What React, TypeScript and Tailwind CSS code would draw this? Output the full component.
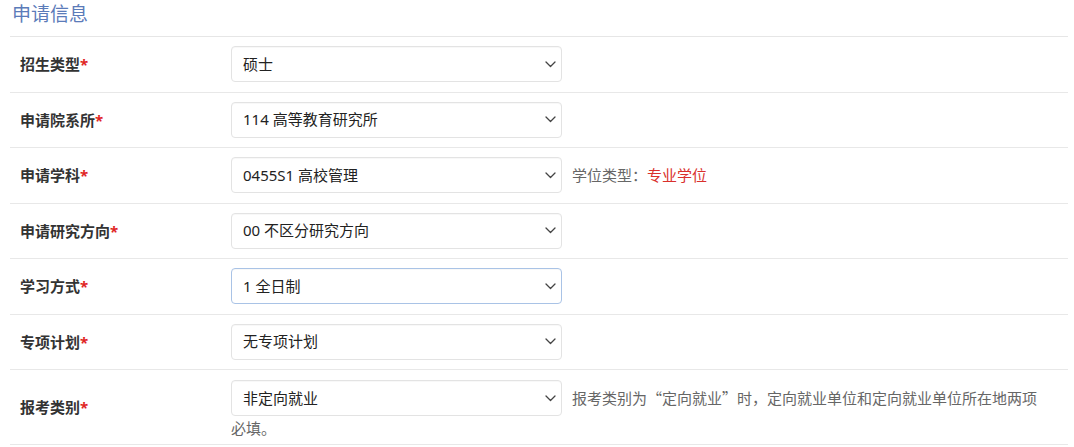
import React from 'react';

type Row = {
  label: string;
  value: string;
  focused?: boolean;
  extra?: React.ReactNode;
  more?: string;
};

const rows: Row[] = [
  { label: '招生类型', value: '硕士' },
  { label: '申请院系所', value: '114 高等教育研究所' },
  {
    label: '申请学科',
    value: '0455S1 高校管理',
    extra: (
      <>
        学位类型：<span className="text-[#d9302c]">专业学位</span>
      </>
    ),
  },
  { label: '申请研究方向', value: '00 不区分研究方向' },
  { label: '学习方式', value: '1 全日制', focused: true },
  { label: '专项计划', value: '无专项计划' },
  {
    label: '报考类别',
    value: '非定向就业',
    extra: '报考类别为“定向就业”时，定向就业单位和定向就业单位所在地两项',
    more: '必填。',
  },
];

const cjk = { fontFamily: '"Noto Sans CJK SC", sans-serif' };

function Chevron() {
  return (
    <svg width="11" height="7" viewBox="0 0 11 7" fill="none" className="shrink-0">
      <path d="M1 1l4.5 4.5L10 1" stroke="#444" strokeWidth="1.3" strokeLinecap="round" strokeLinejoin="round" />
    </svg>
  );
}

function SelectBox({ value, focused }: { value: string; focused?: boolean }) {
  return (
    <span
      className={`flex shrink-0 items-center justify-between w-[331px] h-[36px] pl-[11px] pr-[5px] rounded-[4px] border bg-white text-[15px] leading-none text-[#222] shadow-[inset_0_1px_1px_rgba(0,0,0,0.03)] ${
        focused ? 'border-[#a9c3e6]' : 'border-[#e3e3e3]'
      }`}
    >
      <span>{value}</span>
      <Chevron />
    </span>
  );
}

export default function App() {
  return (
    <div
      className="w-[1074px] h-[447px] bg-white overflow-hidden pl-[10px] pr-[6px]"
      style={{ fontFamily: '"Noto Sans", "Noto Sans CJK SC", sans-serif' }}
    >
      <h2 className="h-[37px] pl-[2px] pt-[1px] text-[19px] leading-[26px] text-[#5b7bb9] font-normal border-b border-[#e6e6e6]">
        申请信息
      </h2>
      {rows.map((r) => (
        <div
          key={r.label}
          className={`flex items-center border-b border-[#e8e8e8] ${r.more ? 'h-[75px]' : 'h-[55.5px]'}`}
        >
          <div className="w-[221px] shrink-0 pl-[10px] text-[15px] font-bold text-[#333]">
            {r.label}
            <span className="text-[#e02525]">*</span>
          </div>
          <div className={`flex flex-col ${r.more ? 'self-start pt-[10px]' : ''}`}>
            <div className="flex items-center">
              <SelectBox value={r.value} focused={r.focused} />
              {r.extra && (
                <span className="ml-[10px] text-[15px] text-[#666] whitespace-nowrap" style={cjk}>
                  {r.extra}
                </span>
              )}
            </div>
            {r.more && (
              <div className="text-[15px] leading-[22px] text-[#666] mt-[1px]" style={cjk}>
                {r.more}
              </div>
            )}
          </div>
        </div>
      ))}
    </div>
  );
}
